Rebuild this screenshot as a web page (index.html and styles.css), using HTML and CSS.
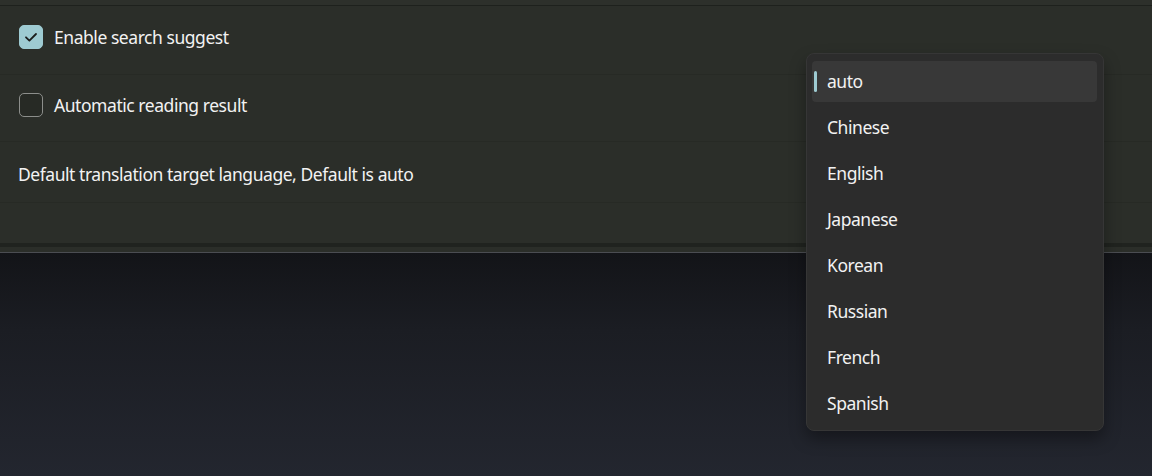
FILE: index.html
```html
<!DOCTYPE html>
<html lang="en">
<head>
<meta charset="utf-8">
<title>Settings</title>
<link rel="stylesheet" href="styles.css">
</head>
<body>
<div class="panel">
  <div class="topbar"></div>
  <div class="row row-first">
    <label class="check">
      <span class="box checked">
        <svg viewBox="0 0 24 24" width="24" height="24"><path d="M7 12.3 L10.4 15.6 L17 9" fill="none" stroke="#1b1d1c" stroke-width="1.8" stroke-linecap="round" stroke-linejoin="round"/></svg>
      </span>
      <span class="label">Enable search suggest</span>
    </label>
  </div>
  <div class="row row-second">
    <label class="check">
      <span class="box"></span>
      <span class="label">Automatic reading result</span>
    </label>
  </div>
  <div class="row row-third">
    <span class="label">Default translation target language, Default is auto</span>
  </div>
  <div class="footer"></div>
  <div class="band"></div>
  <div class="bottom"></div>
</div>

<div class="dropdown">
  <div class="item selected"><span class="bar"></span>auto</div>
  <div class="item">Chinese</div>
  <div class="item">English</div>
  <div class="item">Japanese</div>
  <div class="item">Korean</div>
  <div class="item">Russian</div>
  <div class="item">French</div>
  <div class="item">Spanish</div>
</div>
</body>
</html>
```
FILE: styles.css
```css
html, body {
  margin: 0;
  padding: 0;
}
body {
  width: 1152px;
  height: 476px;
  overflow: hidden;
  font-family: "Noto Sans", "Open Sans", sans-serif;
  background: linear-gradient(180deg, #131418 253px, #1b1d23 330px, #23262f 476px);
  color: #f0f0f0;
  position: relative;
}
.panel {
  background: #2b2e29;
  border-bottom: 1px solid #4b4d52;
}
.topbar {
  height: 5px;
  background: #2d302b;
  border-bottom: 1px solid #1e211d;
}
.row {
  display: flex;
  align-items: center;
  padding-left: 18px;
  border-bottom: 1px solid #272a25;
  box-sizing: border-box;
}
.row-first { height: 69px; padding-left: 19px; padding-bottom: 6px; }
.row-second { height: 67px; padding-left: 19px; padding-bottom: 6px; }
.row-third { height: 61px; padding-top: 4px; }
.footer { height: 40px; }
.band { height: 4px; background: #20231f; }
.bottom { height: 5px; background: #2b2e29; }

.check {
  display: flex;
  align-items: center;
  gap: 11px;
}
.box {
  width: 24px;
  height: 24px;
  box-sizing: border-box;
  border: 1px solid #8c8e8b;
  border-radius: 5px;
  background: #272a25;
  display: flex;
  align-items: center;
  justify-content: center;
  flex: none;
}
.box.checked {
  background: #9ecbd2;
  border-color: #9ecbd2;
}
.box svg { display: block; flex: none; }
.label {
  font-size: 17.5px;
  letter-spacing: -0.45px;
  color: #f2f2f2;
}

.dropdown {
  position: absolute;
  left: 806px;
  top: 53px;
  width: 298px;
  height: 378px;
  box-sizing: border-box;
  padding: 7px 6px 0 5px;
  background: #2c2c2c;
  border: 1px solid #363636;
  border-radius: 8px;
  box-shadow: 0 8px 16px rgba(0,0,0,0.35);
  display: flex;
  flex-direction: column;
  gap: 5px;
}
.item {
  position: relative;
  height: 41px;
  box-sizing: border-box;
  padding-bottom: 2px;
  flex: none;
  display: flex;
  align-items: center;
  padding-left: 15px;
  border-radius: 4px;
  font-size: 17.5px;
  letter-spacing: -0.45px;
  color: #f2f2f2;
}
.item.selected {
  background: #383838;
}
.bar {
  position: absolute;
  left: 2px;
  top: 10px;
  width: 3px;
  height: 21px;
  border-radius: 2px;
  background: #9ecbd2;
}
```
